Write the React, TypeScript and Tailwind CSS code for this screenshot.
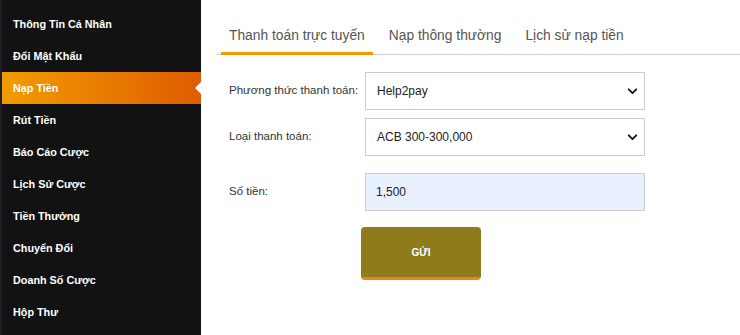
import React, {FC, useState} from 'react';

const MENU = [
  'Thông Tin Cá Nhân',
  'Đổi Mật Khẩu',
  'Nạp Tiền',
  'Rút Tiền',
  'Báo Cáo Cược',
  'Lịch Sử Cược',
  'Tiền Thưởng',
  'Chuyển Đổi',
  'Doanh Số Cược',
  'Hộp Thư'
];

const TABS = ['Thanh toán trực tuyến', 'Nạp thông thường', 'Lịch sử nạp tiền'];

const Chevron: FC = () => (
  <svg width="11" height="11" viewBox="0 0 16 16" className="absolute right-[6px] top-1/2 -translate-y-1/2">
    <path d="M2.5 5.5 8 11l5.5-5.5" fill="none" stroke="#111" strokeWidth="2.6" strokeLinecap="round" strokeLinejoin="round" />
  </svg>
);

const Sidebar: FC<{active: number}> = ({active}) => (
  <div className="flex w-[201px] shrink-0 flex-col border-l-2 border-[#1c1f27] bg-[#121212] pt-[8px]">
    {MENU.map((item, i) => (
      <div
        key={item}
        className={
          i === active
            ? 'relative flex h-[32px] items-center bg-gradient-to-r from-[#f29b00] to-[#df5b00] pl-[11px] text-[10.8px] font-bold text-white'
            : 'relative flex h-[32px] items-center pl-[11px] text-[10.8px] font-bold text-white'
        }
      >
        {item}
        {i === active && (
          <span className="absolute right-0 top-1/2 h-0 w-0 -translate-y-1/2 border-y-[6px] border-r-[6px] border-y-transparent border-r-white" />
        )}
      </div>
    ))}
  </div>
);

const Row: FC<{label: string; children: React.ReactNode; className?: string}> = ({label, children, className}) => (
  <div className={`flex items-center ${className || ''}`}>
    <div className="w-[136px] shrink-0 text-[11.5px] text-[#333]">{label}</div>
    {children}
  </div>
);

const App: FC = () => {
  const [tab, setTab] = useState(0);

  return (
    <div className="flex h-[335px] w-[740px] overflow-hidden bg-white" style={{fontFamily: '"Liberation Sans", Arial, sans-serif'}}>
      <Sidebar active={2} />
      <div className="flex grow flex-col pl-[16px]">
        <div className="mt-[19px] flex h-[36px] border-b border-[#cfcfcf]">
          {TABS.map((t, i) => (
            <div
              key={t}
              onClick={() => setTab(i)}
              className={
                i === tab
                  ? 'ml-[4px] flex h-[36px] cursor-pointer items-start border-b-[3px] border-[#ee9a00] px-[8px] text-[13.8px] text-[#555]'
                  : 'ml-[8px] flex h-[36px] cursor-pointer items-start px-[8px] text-[13.8px] text-[#555]'
              }
            >
              <span className="mt-[7px]">{t}</span>
            </div>
          ))}
        </div>
        <div className="flex flex-col pl-[12px]">
          <Row label="Phương thức thanh toán:" className="mt-[17px]">
            <div className="relative flex h-[38px] w-[280px] items-center border border-[#ccc] bg-white pl-[11px] text-[12px] text-[#222]">
              Help2pay
              <Chevron />
            </div>
          </Row>
          <Row label="Loại thanh toán:" className="mt-[8px]">
            <div className="relative flex h-[38px] w-[280px] items-center border border-[#ccc] bg-white pl-[11px] text-[12px] text-[#222]">
              ACB 300-300,000
              <Chevron />
            </div>
          </Row>
          <Row label="Số tiền:" className="mt-[17px]">
            <div className="flex h-[38px] w-[280px] items-center border border-[#ccc] bg-[#e8f0fe] pl-[10px] text-[12px] text-[#222]">
              1,500
            </div>
          </Row>
          <div className="mt-[16px] pl-[132px]">
            <button className="flex h-[53px] w-[120px] items-center justify-center rounded-[4px] border-b-[3px] border-[#e8861e] bg-[#8f7a1c] text-[10px] font-bold text-white">
              GỬI
            </button>
          </div>
        </div>
      </div>
    </div>
  );
};

export default App;
